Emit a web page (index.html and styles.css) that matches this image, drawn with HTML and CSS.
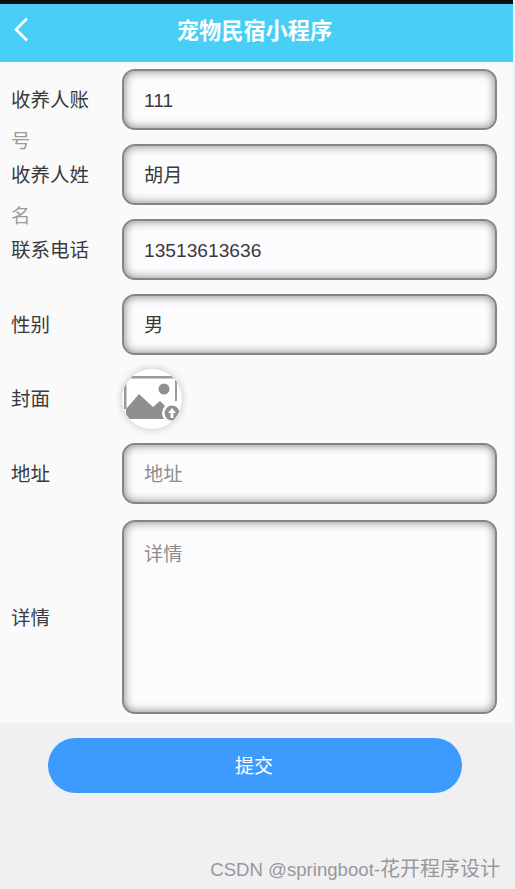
FILE: index.html
```html
<!DOCTYPE html>
<html lang="zh-CN">
<head>
  <meta charset="UTF-8">
  <title>宠物民宿小程序</title>
  <link rel="stylesheet" href="styles.css">
</head>
<body>
  <div id="page">
    <!-- Header -->
    <div class="header">
      <svg class="back" width="16" height="26" viewBox="0 0 16 26">
        <path d="M14 1.5 L3 12.5 L14 23.5" fill="none" stroke="#fff" stroke-width="2.6"/>
      </svg>
      <div class="title">宠物民宿小程序</div>
    </div>

    <!-- Form -->
    <form class="form">
      <div class="row">
        <div class="label">收养人账<span class="faint">号</span></div>
        <div class="field">111</div>
      </div>
      <div class="row">
        <div class="label">收养人姓<span class="faint">名</span></div>
        <div class="field">胡月</div>
      </div>
      <div class="row">
        <div class="label">联系电话</div>
        <div class="field">13513613636</div>
      </div>
      <div class="row">
        <div class="label">性别</div>
        <div class="field">男</div>
      </div>
      <div class="row">
        <div class="label">封面</div>
        <div class="cover">
          <svg width="60" height="60" viewBox="0 0 60 60">
            <path d="M2 7 H55 V32 H53 V9.5 H4.5 V40 H2 Z" fill="#9a9a9c"/>
            <circle cx="42" cy="20" r="5.5" fill="#8f8f91"/>
            <path d="M4 50 V40 L17 25 L31 38 L38 32 L46 40 L42 50 Z" fill="#8f8f91"/>
            <circle cx="50" cy="44" r="10" fill="#fff"/>
            <circle cx="50" cy="44" r="7.5" fill="#8f8f91"/>
            <path d="M50 39 L54 44 H51.5 V49 H48.5 V44 H46 Z" fill="#fff"/>
          </svg>
        </div>
      </div>
      <div class="row">
        <div class="label">地址</div>
        <div class="field placeholder">地址</div>
      </div>
      <div class="row row-last">
        <div class="label">详情</div>
        <div class="field area placeholder">详情</div>
      </div>
    </form>

    <div class="actions">
      <button type="button" class="submit">提交</button>
    </div>
  </div>

  <div class="watermark">CSDN @springboot-<span class="watermark-cn">花开程序设计</span></div>
</body>
</html>
```

FILE: styles.css
```css
html, body {
  margin: 0;
  height: 100%;
}
body {
  background: #f0f0f2;
  color: #333;
  font-family: "Liberation Sans", "Noto Sans CJK SC", sans-serif;
  overflow: hidden;
  position: relative;
}
#page {
  border-top: 4px solid #0b0f12;
  margin-right: 2px;
}
.header {
  height: 58px;
  background: #49cff5;
  display: flex;
  align-items: center;
  justify-content: center;
  position: relative;
}
.back {
  position: absolute;
  left: 13px;
  top: 13px;
}
.title {
  color: #fff;
  font-size: 22.2px;
  font-weight: bold;
  margin: 0 4px 9px 0;
}
.form {
  background: #fafafb;
  padding: 7px 16px 9px 11px;
}
.row {
  display: flex;
  align-items: center;
  margin-bottom: 14px;
}
.row-last {
  margin-bottom: 0;
}
.row-last .label {
  padding-top: 5px;
}
.label {
  width: 80px;
  height: 41px;
  line-height: 41px;
  margin-right: 31px;
  padding-top: 1px;
  font-size: 19.5px;
  color: #3a3a3c;
}
.faint {
  color: #9a9a9c;
}
.field {
  flex: 1;
  height: 61px;
  line-height: 60px;
  box-sizing: border-box;
  padding-left: 20px;
  background: #fcfcfe;
  border: 2px solid #858587;
  border-radius: 13px;
  box-shadow: inset 0 0 10px rgba(0, 0, 0, 0.5);
  font-size: 19.2px;
  color: #3a3a3c;
}
.placeholder {
  color: #8c8c8e;
}
.area {
  height: 194px;
  line-height: 30px;
  padding-top: 18px;
  margin-top: 2px;
}
.cover {
  width: 60px;
  height: 60px;
  border-radius: 50%;
  background: #fff;
  overflow: hidden;
  box-shadow: 0 0 8px rgba(0, 0, 0, 0.22);
}
.cover svg {
  display: block;
}
.actions {
  padding: 15px 0 0 48px;
}
.submit {
  display: block;
  width: 414px;
  height: 55px;
  border: none;
  border-radius: 28px;
  background: #3e9bfe;
  color: #fff;
  font-family: inherit;
  font-size: 19px;
  padding: 0 2px 2px 0;
}
.watermark {
  position: absolute;
  right: 15px;
  bottom: 7px;
  font-size: 18.6px;
  color: #98989a;
}
.watermark-cn {
  font-size: 20px;
}
```
